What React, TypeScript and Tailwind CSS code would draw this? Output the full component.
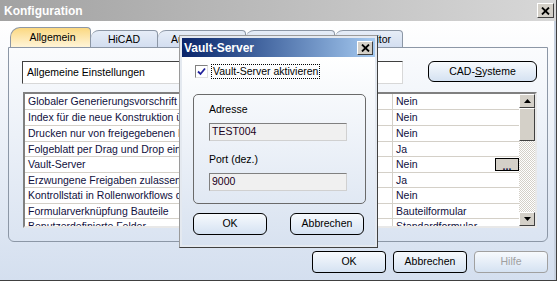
import { ReactNode } from "react"

const rows = [
  { label: "Globaler Generierungsvorschrift für Artikelnummern", value: "Nein", h: "h-[16px]" },
  { label: "Index für die neue Konstruktion übernehmen", value: "Nein", h: "h-[16px]" },
  { label: "Drucken nur von freigegebenen Dokumenten", value: "Nein", h: "h-[16px]" },
  { label: "Folgeblatt per Drag und Drop einfügen", value: "Ja", h: "h-[15px]" },
  { label: "Vault-Server", value: "Nein", h: "h-[16px]", more: true },
  { label: "Erzwungene Freigaben zulassen", value: "Ja", h: "h-[15px]" },
  { label: "Kontrollstati in Rollenworkflows durchsetzen", value: "Nein", h: "h-[16px]" },
  { label: "Formularverknüpfung Bauteile", value: "Bauteilformular", h: "h-[15px]" },
  { label: "Benutzerdefinierte Felder", value: "Standardformular", h: "h-[16px]" },
]

const tabs = [
  { label: "HiCAD", cls: "w-[67px] justify-center" },
  { label: "Ausgabe", cls: "w-[88px] justify-start pl-[13px]" },
  { label: "Workflow", cls: "w-[89px] justify-center" },
  { label: "Editor", cls: "w-[68px] justify-end pr-[11px]" },
]

function Button({ children, disabled, className = "" }: { children: ReactNode; disabled?: boolean; className?: string }) {
  return (
    <div
      className={`flex items-center justify-center h-[22px] w-[74px] rounded-[4px] border bg-gradient-to-b from-[#f7fafd] to-[#d5e2f2] ${
        disabled ? "border-[#a0a0a0] text-[#a0a0a0]" : "border-black text-black"
      } ${className}`}
    >
      {children}
    </div>
  )
}

function CloseBox({ className = "" }: { className?: string }) {
  return (
    <div className={`flex items-center justify-center shrink-0 bg-[#d4d0c8] border border-t-white border-l-white border-r-[#404040] border-b-[#404040] ${className}`}>
      <svg width="9" height="8" viewBox="0 0 9 8">
        <path d="M1 0.5 L8 7.5 M8 0.5 L1 7.5" stroke="black" strokeWidth="1.8" />
      </svg>
    </div>
  )
}

function ScrollArrow({ down }: { down?: boolean }) {
  return (
    <div className="flex items-center justify-center shrink-0 h-[14px] w-full bg-[#d4d0c8] border border-t-white border-l-white border-r-[#404040] border-b-[#404040]">
      <svg width="7" height="4" viewBox="0 0 7 4">
        <path d={down ? "M0 0 H7 L3.5 4 Z" : "M0 4 H7 L3.5 0 Z"} fill="black" />
      </svg>
    </div>
  )
}

export default function App() {
  return (
    <div className="relative w-[558px] h-[283px] bg-white overflow-hidden font-['Liberation_Sans',Arial,sans-serif] text-[10.5px] text-black">
      {/* Main window */}
      <div className="flex flex-col w-[557px] h-[281px] border-r border-b border-[#404040]">
        {/* Title bar */}
        <div className="flex items-center justify-between shrink-0 h-[21px] pl-[4px] pr-[2px] bg-gradient-to-r from-[#a2a2a2] to-[#d8d8d8]">
          <span className="text-white font-bold text-[12px]">Konfiguration</span>
          <CloseBox className="w-[17px] h-[15px]" />
        </div>

        {/* Body */}
        <div className="flex-1 flex flex-col pl-[8px] pr-[6px] pt-[6px] bg-gradient-to-b from-white to-[#d4dfef] border-r-2 border-[#c8d2e0]">
          {/* Tabs */}
          <div className="flex items-end h-[21px] pl-[2px] -mb-px">
            <div className="flex shrink-0 items-center justify-center w-[81px] h-[21px] rounded-tl-[10px] rounded-tr-[4px] border border-b-0 border-[#8c97a6] bg-gradient-to-b from-[#fbd880] to-[#fff6dc]">
              <span className="pl-[4px]">Allgemein</span>
            </div>
            {tabs.map((t) => (
              <div
                key={t.label}
                className={`flex shrink-0 items-center h-[18px] pt-[2px] rounded-tl-[8px] rounded-tr-[4px] border border-l-0 border-[#8c97a6] bg-gradient-to-b from-[#e6edf7] to-[#d3def0] ${t.cls}`}
              >
                {t.label}
              </div>
            ))}
          </div>

          {/* Panel */}
          <div className="flex flex-col h-[195px] border border-[#8c97a6] rounded-b-[6px] pl-[13px] pr-[10px] pt-[13px]">
            <div className="flex items-start justify-between">
              <div className="flex items-center w-[381px] h-[23px] pl-[4px] bg-white border border-t-[#404040] border-l-[#404040] border-r-[#d8d8d8] border-b-[#d8d8d8]">
                Allgemeine Einstellungen
              </div>
              <div className="flex items-center justify-center w-[109px] h-[21px] rounded-[6px] border border-black bg-gradient-to-b from-[#f7fafd] to-[#d5e2f2]">
                CAD-<span className="underline">S</span>ysteme
              </div>
            </div>

            {/* List */}
            <div className="flex mt-[8px] ml-px w-[514px] h-[136px] border-2 border-t-[#808080] border-l-[#808080] border-r-[#e8e8e8] border-b-[#e8e8e8] bg-white overflow-hidden">
              <div className="flex-1 flex flex-col text-[#101040] overflow-hidden">
                {rows.map((r) => (
                  <div key={r.label} className={`flex shrink-0 ${r.h} border-b border-[#d4d0c8]`}>
                    <div className="w-[368px] pl-[3px] border-r border-[#d4d0c8] whitespace-nowrap overflow-hidden leading-[15px]">
                      {r.label}
                    </div>
                    <div className="flex-1 flex items-center justify-between pl-[3px] leading-[15px]">
                      <span>{r.value}</span>
                      {r.more && (
                        <div className="flex items-end justify-center w-[24px] h-[13px] bg-[#d4d0c8] border border-black leading-[8px] font-bold">
                          ...
                        </div>
                      )}
                    </div>
                  </div>
                ))}
              </div>
              {/* Scrollbar */}
              <div className="flex flex-col w-[16px] bg-[repeating-conic-gradient(#d4d0c8_0%_25%,#ffffff_0%_50%)] bg-[length:2px_2px]">
                <ScrollArrow />
                <div className="shrink-0 h-[33px] bg-[#d4d0c8] border border-t-white border-l-white border-r-[#404040] border-b-[#404040]" />
                <div className="flex-1" />
                <ScrollArrow down />
              </div>
            </div>
          </div>

          {/* Bottom buttons */}
          <div className="flex justify-end gap-[7px] mt-[9px]">
            <Button>OK</Button>
            <Button>Abbrechen</Button>
            <Button disabled>Hilfe</Button>
          </div>
        </div>
      </div>

      {/* Vault-Server dialog */}
      <div className="absolute z-20 left-[179px] top-[35px] w-[199px] h-[213px] flex flex-col p-[2px] bg-[#e4e9f0] border border-[#9a9a9a] border-r-[#404040] border-b-[#404040]">
        <div className="flex items-center justify-between shrink-0 h-[19px] pl-[2px] pr-[2px] bg-gradient-to-r from-[#0a246a] to-[#a6caf0]">
          <span className="text-white font-bold text-[12px]">Vault-Server</span>
          <CloseBox className="w-[16px] h-[14px]" />
        </div>
        <div className="flex-1 flex flex-col pl-[11px] pt-[7px] bg-gradient-to-b from-white to-[#d8e2f0]">
          <div className="flex items-center gap-[3px] pl-[2px]">
            <div className="flex items-center justify-center w-[13px] h-[13px] bg-white border border-t-[#808080] border-l-[#808080] border-r-[#e0e0e0] border-b-[#e0e0e0]">
              <svg width="9" height="9" viewBox="0 0 9 9">
                <path d="M1 4.5 L3.5 7 L8 1.5" stroke="#21219c" strokeWidth="1.8" fill="none" />
              </svg>
            </div>
            <span className="px-[1px] border border-dotted border-black leading-[13px]">Vault-Server aktivieren</span>
          </div>

          <div className="flex flex-col shrink-0 mt-[15px] w-[173px] h-[110px] rounded-[5px] border border-[#6a6a6a] pl-[15px] pt-[7px]">
            <span>Adresse</span>
            <div className="flex items-center mt-[5px] w-[138px] h-[18px] pl-[2px] bg-[#f0f0f0] border border-t-[#808080] border-l-[#808080] border-r-[#d0d0d0] border-b-[#d0d0d0] text-[#200020]">
              TEST004
            </div>
            <span className="mt-[11px]">Port (dez.)</span>
            <div className="flex items-center mt-[5px] w-[138px] h-[18px] pl-[2px] bg-[#f0f0f0] border border-t-[#808080] border-l-[#808080] border-r-[#d0d0d0] border-b-[#d0d0d0] text-[#200020]">
              9000
            </div>
          </div>

          <div className="flex gap-[23px] mt-[9px]">
            <Button className="rounded-[6px]">OK</Button>
            <Button className="rounded-[6px]">Abbrechen</Button>
          </div>
        </div>
      </div>
    </div>
  )
}
